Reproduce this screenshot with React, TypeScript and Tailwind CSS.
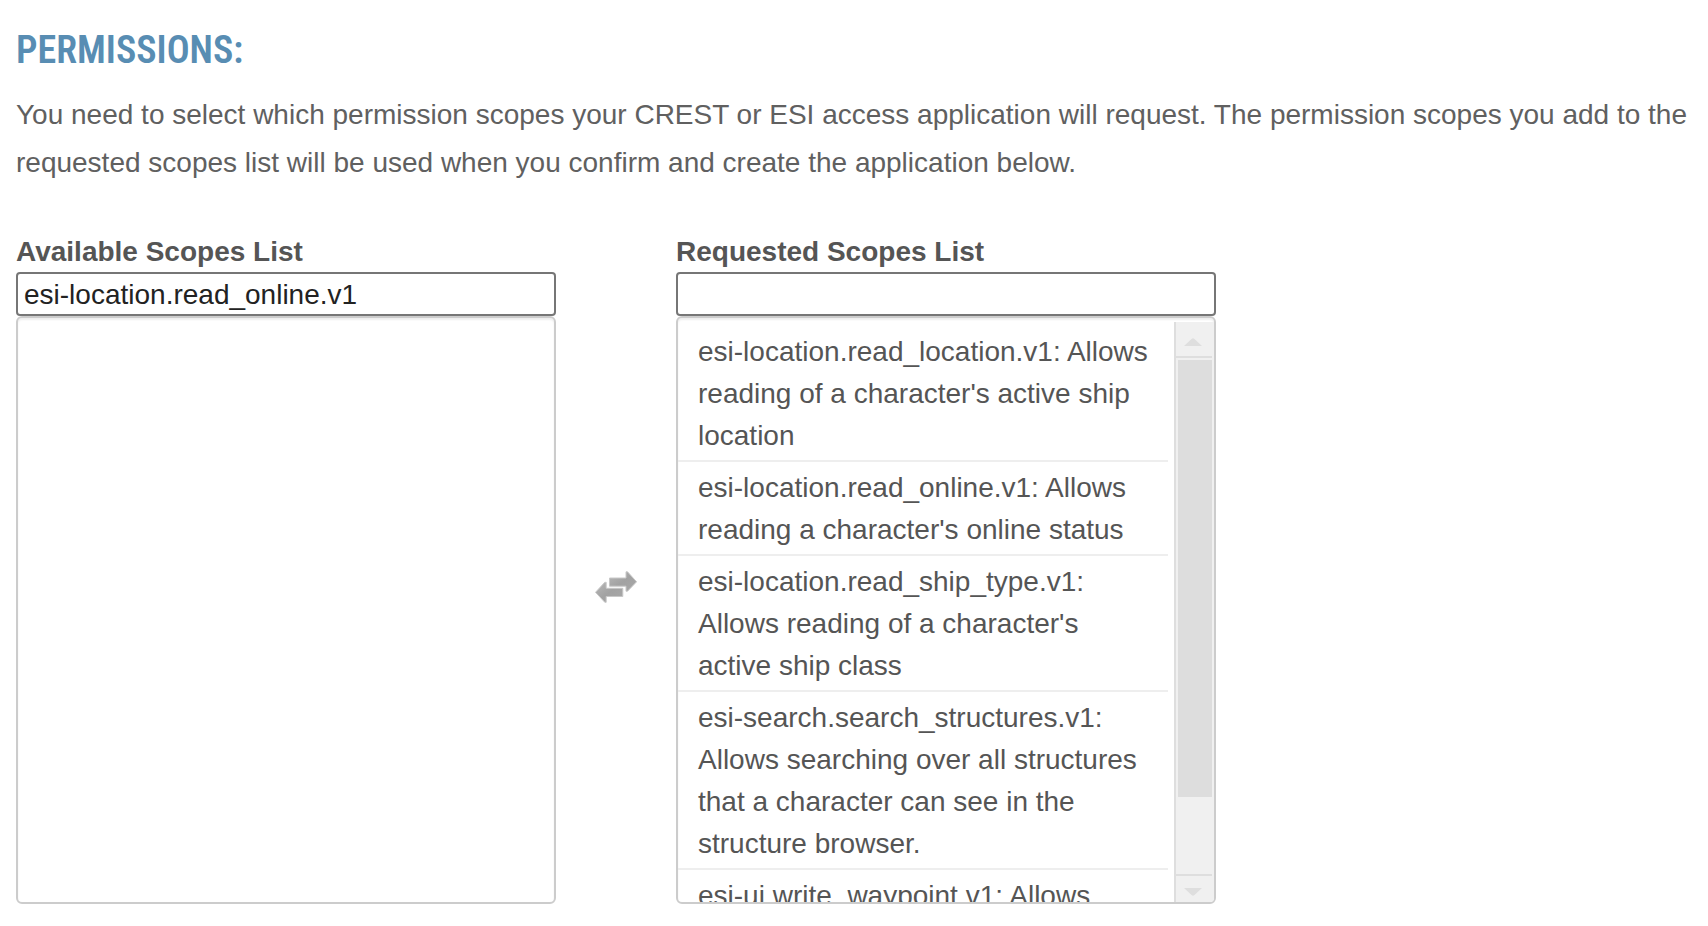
import { useRef, useState } from "react";

type Scope = { name: string; description: string };

const requested: Scope[] = [
  { name: "esi-location.read_location.v1", description: "Allows reading of a character's active ship location" },
  { name: "esi-location.read_online.v1", description: "Allows reading a character's online status" },
  { name: "esi-location.read_ship_type.v1", description: "Allows reading of a character's active ship class" },
  { name: "esi-search.search_structures.v1", description: "Allows searching over all structures that a character can see in the structure browser." },
  { name: "esi-ui.write_waypoint.v1", description: "Allows" },
];

function Scrollbar({ onStep }: { onStep: (amount: number) => void }) {
  return (
    <div className="mt-1 flex w-10 shrink-0 flex-col border-l-2 border-[#dedede] bg-[#f0f0f0] pr-0.5">
      <button
        type="button"
        aria-label="Scroll up"
        onClick={() => onStep(-42)}
        className="flex h-9 shrink-0 items-center justify-center border-b-2 border-[#dedede] pt-1.5 pr-0.5"
      >
        <svg width="18" height="8" viewBox="0 0 18 8" fill="#dedede" aria-hidden="true">
          <path d="M0 8 7.500 1Q9-.5 10.500 1L18 8Z" />
        </svg>
      </button>
      <div className="flex-1 pt-0.5 pl-0.5">
        <div className="h-[85%] bg-[#dddddd]" />
      </div>
      <button
        type="button"
        aria-label="Scroll down"
        onClick={() => onStep(42)}
        className="flex h-7 shrink-0 items-center justify-center border-t-2 border-[#dedede] pt-1.5 pr-0.5"
      >
        <svg width="18" height="8" viewBox="0 0 18 8" fill="#dedede" aria-hidden="true">
          <path d="M0 0 7.500 7Q9 8.500 10.500 7L18 0Z" />
        </svg>
      </button>
    </div>
  );
}

function ScopeColumn({ id, title, initial, scopes }: { id: string; title: string; initial: string; scopes: Scope[] }) {
  const [filter, setFilter] = useState(initial);
  const list = useRef<HTMLUListElement>(null);
  const shown = scopes.filter((s) => s.name.includes(filter));
  return (
    <div className="flex max-w-[540px] min-w-0 flex-1 flex-col">
      <label htmlFor={id} className="text-[28px] leading-[40px] font-bold">
        {title}
      </label>
      <input
        id={id}
        type="text"
        value={filter}
        onChange={(e) => setFilter(e.target.value)}
        className="h-11 w-full rounded-[4px] border-2 border-[#767676] bg-white px-1.5 pt-0.5 text-[28px] text-[#222222] outline-none"
      />
      <div className="flex h-[588px] overflow-hidden rounded-[6px] border-2 border-[#cccccc] bg-white shadow-[inset_0_2px_2px_rgba(0,0,0,0.07)]">
        <ul ref={list} className="min-w-0 flex-1 overflow-hidden pt-2">
          {shown.map((s) => (
            <li key={s.name} className="mr-1.5 border-b-2 border-[#eeeeee] pt-[5px] pr-4 pb-[3px] pl-5 text-[28px] leading-[42px]">
              {`${s.name}: ${s.description}`}
            </li>
          ))}
        </ul>
        {shown.length > 0 && <Scrollbar onStep={(top) => list.current?.scrollBy({ top })} />}
      </div>
    </div>
  );
}

export default function App() {
  return (
    <main className="min-h-screen bg-white px-4 pt-6 pb-5 font-['Liberation_Sans',Arial,sans-serif] text-[#555555]">
      <h1 className="font-['Roboto_Condensed','Liberation_Sans_Narrow','Liberation_Sans',sans-serif] text-[38px] leading-[53px] font-semibold text-[#588db3] uppercase">
        Permissions:
      </h1>
      <p className="mt-3.5 text-[28px] leading-[48px] text-[#606060]">
        You need to select which permission scopes your CREST or ESI access application will request. The permission
        scopes you add to the requested scopes list will be used when you confirm and create the application below.
      </p>
      <div className="mt-[45px] flex">
        <ScopeColumn id="available" title="Available Scopes List" initial="esi-location.read_online.v1" scopes={[]} />
        <div className="flex w-[120px] shrink-0 items-center justify-center pt-[38px]">
          <svg width="42" height="32" viewBox="0 0 42 32" role="img" aria-label="Move scopes between lists">
            <defs>
              <linearGradient id="arrow" x1="0" y1="0" x2="1" y2="1">
                <stop offset="0" stopColor="#b8b8b8" />
                <stop offset="0.5" stopColor="#a2a2a2" />
                <stop offset="1" stopColor="#a8a8a8" />
              </linearGradient>
            </defs>
            <g fill="url(#arrow)" stroke="#c8c8c8" strokeWidth="1" strokeLinejoin="round">
              <path d="M14.500 7H31V.8H32.500L41.600 10.800 32.500 20.200H31V15.200H14.500Z" />
              <path d="M27.800 17.300H11.200V11.300H9.800L.5 21.300 9.800 31.300H11.200V25.500H27.800Z" />
            </g>
          </svg>
        </div>
        <ScopeColumn id="requested" title="Requested Scopes List" initial="" scopes={requested} />
      </div>
    </main>
  );
}
